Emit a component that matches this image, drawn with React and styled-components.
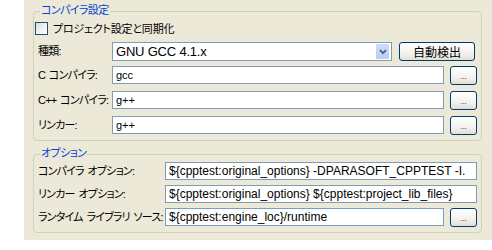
import React from "react";
import styled, { createGlobalStyle } from "styled-components";

const Global = createGlobalStyle`
  html, body { margin: 0; padding: 0; background: #ffffff; }
  body {
    font-family: "Liberation Sans", "Noto Sans CJK JP", sans-serif;
    font-size: 12px;
    color: #000;
    font-feature-settings: "palt";
  }
`;

const Panel = styled.div`
  margin-left: 24px;
  width: 468px;
  height: 240px;
  background: #ece9d8;
  box-sizing: border-box;
  padding: 2px 10px 0 9px;
  display: flex;
  flex-direction: column;
  gap: 4px;
`;

const Group = styled.fieldset`
  margin: 0;
  border: 1px solid #d0d0bf;
  border-radius: 4px;
  padding: 0 4px ${(p) => p.$pb}px 4px;
  display: flex;
  flex-direction: column;
  min-width: 0;
`;

const Legend = styled.legend`
  padding: 0 1px 4px 1px;
  margin-left: 2px;
  color: #0046d5;
  font-family: "Noto Sans CJK JP", sans-serif;
  font-size: 11px;
  line-height: 14px;
  letter-spacing: -0.6px;
`;

const CheckRow = styled.label`
  display: flex;
  align-items: center;
  gap: 5px;
  height: 16px;
  margin-left: -3px;
  font-family: "Noto Sans CJK JP", sans-serif;
  font-size: 11px;
  letter-spacing: -0.2px;
`;

const Box = styled.span`
  width: 11px;
  height: 11px;
  border: 1px solid #1c5180;
  background: linear-gradient(135deg, #dcdcd7 0%, #f4f4f1 60%, #ffffff 100%);
`;

const Row = styled.div`
  display: flex;
  align-items: flex-start;
  height: ${(p) => p.$h}px;
  margin-top: ${(p) => p.$mt}px;
`;

const Label = styled.span`
  width: ${(p) => p.$w}px;
  flex: none;
  white-space: nowrap;
  font-size: 11px;
  line-height: 18px;
  letter-spacing: -0.8px;
  word-spacing: 1.5px;
`;

const Field = styled.div`
  box-sizing: border-box;
  width: ${(p) => p.$w}px;
  height: 18px;
  border: 1px solid #7f9db9;
  background: #fff;
  display: flex;
  align-items: center;
  padding-left: 3px;
  font-size: ${(p) => p.$fs || 12}px;
  white-space: nowrap;
  overflow: hidden;
  flex: none;
`;

const Combo = styled(Field)`
  height: 19px;
  padding-right: 2px;
  justify-content: space-between;
  font-size: 13px;
  letter-spacing: -0.2px;
`;

const DropBtn = styled.span`
  width: 13px;
  height: 15px;
  border-radius: 1px;
  background: linear-gradient(#cfdcfb, #bacdf6);
  display: flex;
  align-items: center;
  justify-content: center;
`;

const Button = styled.button`
  box-sizing: border-box;
  margin-left: ${(p) => p.$ml}px;
  width: ${(p) => p.$w}px;
  height: 19px;
  border: 1px solid #003c74;
  border-radius: 3px;
  background: linear-gradient(#ffffff 0%, #f3f2ee 60%, #e2ded2 100%);
  font-family: "Noto Sans CJK JP", sans-serif;
  font-size: ${(p) => p.$fs}px;
  color: ${(p) => p.$color};
  padding: 0;
  display: flex;
  align-items: center;
  justify-content: center;
  line-height: 1;
  flex: none;
`;

const Dots = (props) => (
  <Button $ml={6} $w={27} $fs={8} $color="#555" {...props}>...</Button>
);

export default function App() {
  return (
    <>
      <Global />
      <Panel>
        <Group $pb={5}>
          <Legend>コンパイラ設定</Legend>
          <CheckRow>
            <Box />
            プロジェクト設定と同期化
          </CheckRow>
          <Row $h={19} $mt={6}>
            <Label $w={74}>種類:</Label>
            <Combo $w={280}>
              GNU GCC 4.1.x
              <DropBtn>
                <svg width="8" height="6" viewBox="0 0 8 6">
                  <path d="M1 1.2 L4 4.2 L7 1.2" fill="none" stroke="#4d6185" strokeWidth="1.8" />
                </svg>
              </DropBtn>
            </Combo>
            <Button $ml={7} $w={76} $fs={12} $color="#000">自動検出</Button>
          </Row>
          <Row $h={19} $mt={5}>
            <Label $w={74}>C コンパイラ:</Label>
            <Field $w={332} $fs={11}>gcc</Field>
            <Dots />
          </Row>
          <Row $h={19} $mt={6}>
            <Label $w={74}>C++ コンパイラ:</Label>
            <Field $w={332} $fs={11}>g++</Field>
            <Dots />
          </Row>
          <Row $h={19} $mt={6}>
            <Label $w={74}>リンカー:</Label>
            <Field $w={332} $fs={11}>g++</Field>
            <Dots />
          </Row>
        </Group>
        <Group $pb={5}>
          <Legend>オプション</Legend>
          <Row $h={18} $mt={-1}>
            <Label $w={127}>コンパイラ オプション:</Label>
            <Field $w={312}>{"${cpptest:original_options} -DPARASOFT_CPPTEST -I."}</Field>
          </Row>
          <Row $h={18} $mt={5}>
            <Label $w={127}>リンカー オプション:</Label>
            <Field $w={312}>{"${cpptest:original_options} ${cpptest:project_lib_files}"}</Field>
          </Row>
          <Row $h={19} $mt={5}>
            <Label $w={127}>ランタイム ライブラリ ソース:</Label>
            <Field $w={279}>{"${cpptest:engine_loc}/runtime"}</Field>
            <Dots />
          </Row>
        </Group>
      </Panel>
    </>
  );
}
